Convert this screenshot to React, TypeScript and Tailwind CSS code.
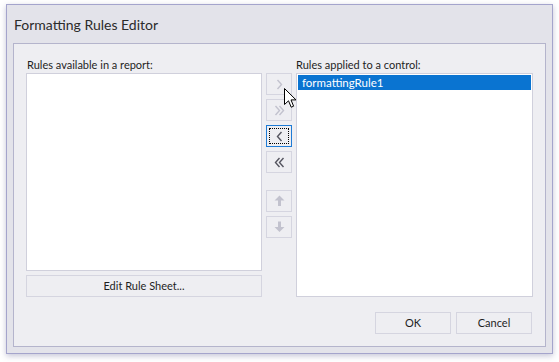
import React from "react";

const font = { fontFamily: 'Lato, "Open Sans", "Liberation Sans", sans-serif' };

function Chevron({ dir, double, color }: { dir: "left" | "right"; double?: boolean; color: string }) {
  const one = dir === "right" ? "M1.5 1 L5.5 5.5 L1.5 10" : "M5.5 1 L1.5 5.5 L5.5 10";
  const two = dir === "right" ? "M5.5 1 L9.5 5.5 L5.5 10" : "M9.5 1 L5.5 5.5 L9.5 10";
  return (
    <svg width={double ? 11 : 7} height={11} viewBox={double ? "0 0 11 11" : "0 0 7 11"}>
      <path d={one} fill="none" stroke={color} strokeWidth="1.4" />
      {double ? <path d={two} fill="none" stroke={color} strokeWidth="1.4" /> : null}
    </svg>
  );
}

function Arrow({ dir, color }: { dir: "up" | "down"; color: string }) {
  const d =
    dir === "up"
      ? "M5.5 0.5 L10.5 5.5 L7 5.5 L7 11 L4 11 L4 5.5 L0.5 5.5 Z"
      : "M5.5 11 L10.5 6 L7 6 L7 0.5 L4 0.5 L4 6 L0.5 6 Z";
  return (
    <svg width={11} height={12} viewBox="0 0 11 12">
      <path d={d} fill={color} />
    </svg>
  );
}

function SideButton({ children, focused }: { children: React.ReactNode; focused?: boolean }) {
  return (
    <button
      type="button"
      className={`relative flex h-[22px] w-[26px] items-center justify-center bg-[#eeeef2] ${
        focused ? "border border-[#1e7bd6]" : "border border-[#d5d5e0]"
      }`}
    >
      {focused ? (
        <span className="absolute inset-[2px] border border-dotted border-black" />
      ) : null}
      {children}
    </button>
  );
}

function Cursor() {
  return (
    <svg
      className="absolute left-[284px] top-[88px]"
      width={13}
      height={21}
      viewBox="0 0 13 21"
    >
      <path
        d="M0.5 0.5 L0.5 16.5 L4.5 12.8 L7.2 19.2 L9.6 18.2 L7 11.9 L12 11.9 Z"
        fill="#ffffff"
        stroke="#000000"
        strokeWidth="1"
        strokeLinejoin="miter"
      />
    </svg>
  );
}

export default function App() {
  return (
    <div className="relative h-[362px] w-[559px] overflow-hidden bg-white pl-[6px] pt-[4px]" style={font}>
      <div className="flex h-[350px] w-[547px] flex-col border border-[#a4a4cc] bg-[#e3e3ea] shadow-[0_2px_6px_rgba(90,90,140,0.35)]">
        <div className="flex h-[38px] items-center pl-[7px] pt-[1px] text-[14px] text-[#2b2b2b]">
          Formatting Rules Editor
        </div>
        <div className="mx-[6px] mb-[6px] flex flex-1 flex-col border border-[#b4b4cc] bg-[#eeeef2] px-[12px] pt-[13px] text-[11px] text-[#1e1e1e]">
          <div className="flex gap-[4px]">
            <div className="flex w-[236px] flex-col">
              <div className="h-[16px] pl-[1px] leading-[16px]">Rules available in a report:</div>
              <div className="h-[198px] border border-[#d0d0dc] bg-white" />
              <button
                type="button"
                className="mt-[4px] h-[22px] border border-[#d5d5e0] bg-[#eeeef2] text-[11px] text-[#1e1e1e]"
              >
                Edit Rule Sheet...
              </button>
            </div>
            <div className="flex w-[26px] flex-col gap-[4px] pt-[16px]">
              <SideButton>
                <Chevron dir="right" color="#c2c2ce" />
              </SideButton>
              <SideButton>
                <Chevron dir="right" double color="#c2c2ce" />
              </SideButton>
              <SideButton focused>
                <Chevron dir="left" color="#555560" />
              </SideButton>
              <SideButton>
                <Chevron dir="left" double color="#555560" />
              </SideButton>
              <div className="mt-[13px]">
                <SideButton>
                  <Arrow dir="up" color="#c2c2ce" />
                </SideButton>
              </div>
              <SideButton>
                <Arrow dir="down" color="#c2c2ce" />
              </SideButton>
            </div>
            <div className="flex w-[237px] flex-col">
              <div className="h-[16px] leading-[16px]">Rules applied to a control:</div>
              <div className="h-[224px] border border-[#d0d0dc] bg-white p-[1px]">
                <div className="h-[15px] bg-[#0a74d1] pl-[4px] text-[11.5px] leading-[15px] text-white">formattingRule1</div>
              </div>
            </div>
          </div>
          <div className="mt-[15px] flex justify-end gap-[5px] pr-[1px]">
            <button type="button" className="h-[22px] w-[76px] border border-[#d5d5e0] bg-[#eeeef2] text-[11px]">
              OK
            </button>
            <button type="button" className="h-[22px] w-[76px] border border-[#d5d5e0] bg-[#eeeef2] text-[11px]">
              Cancel
            </button>
          </div>
        </div>
      </div>
      <Cursor />
    </div>
  );
}
